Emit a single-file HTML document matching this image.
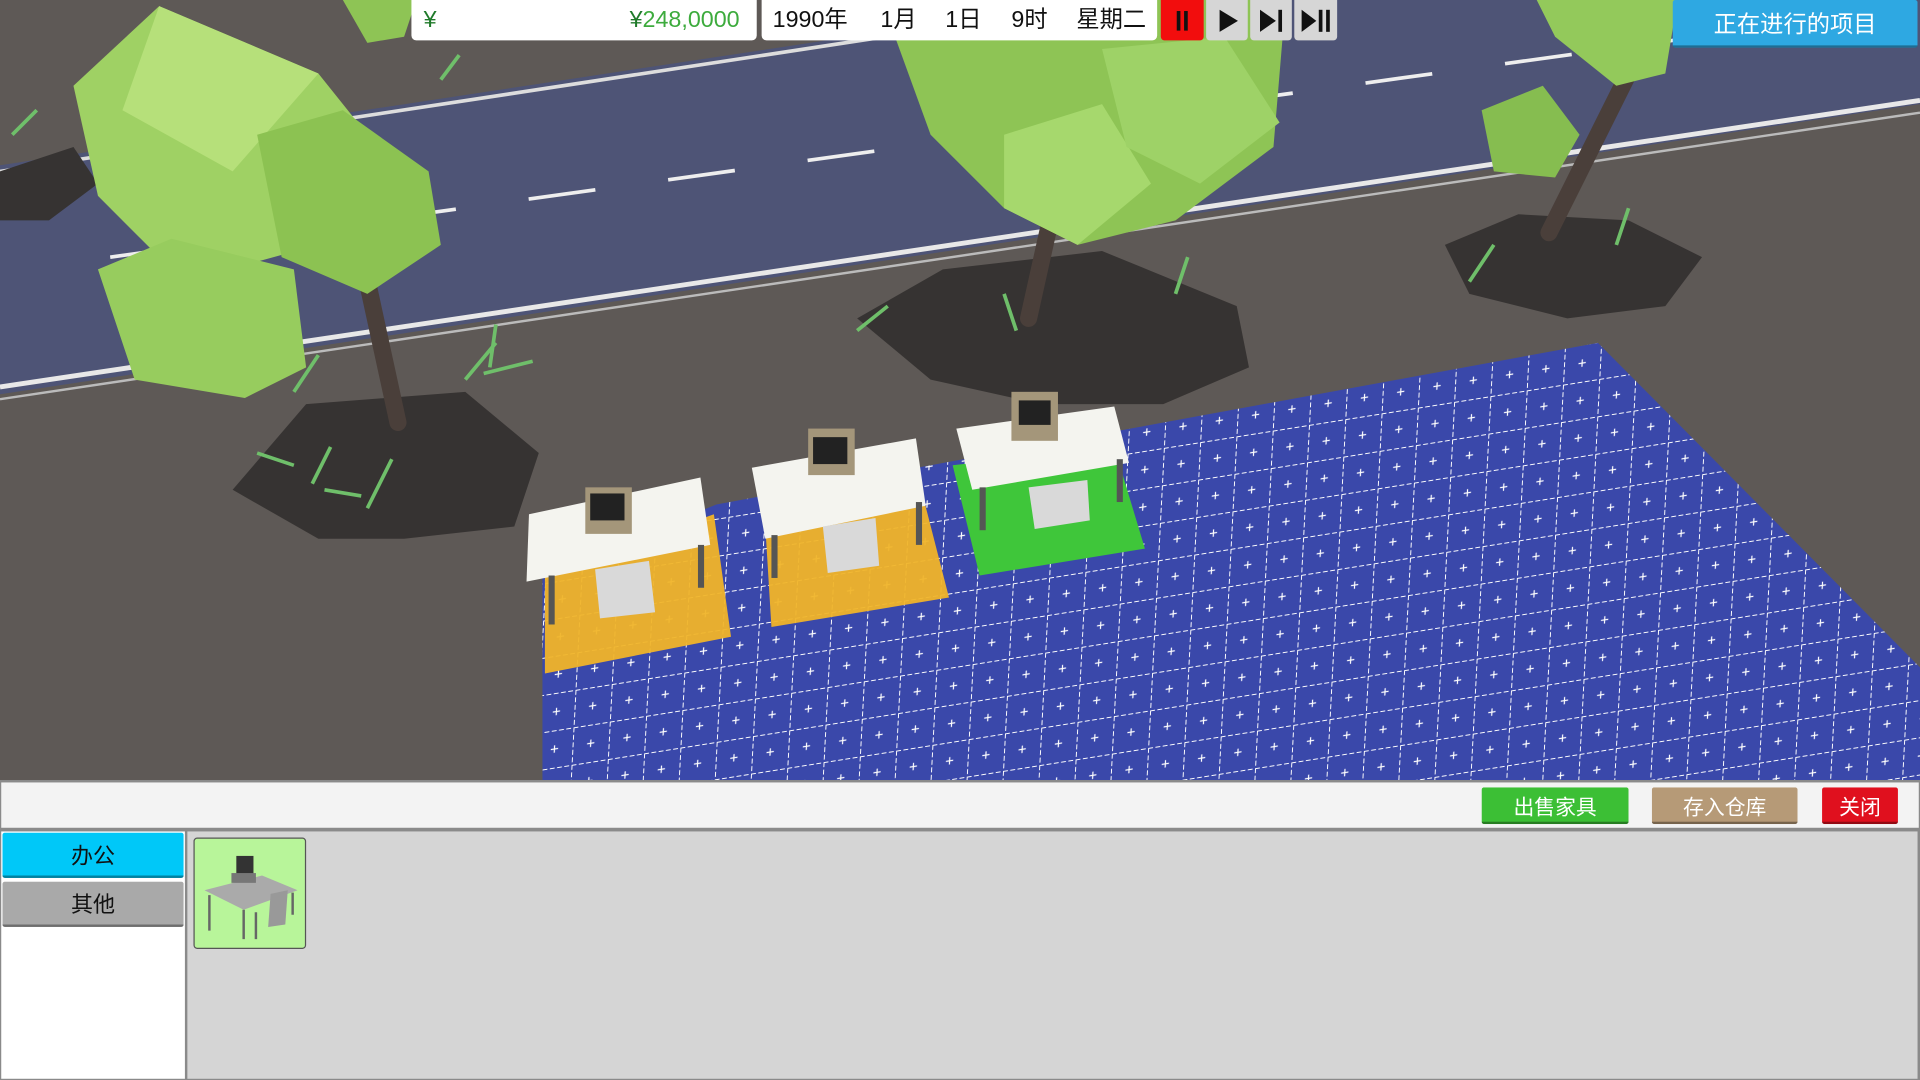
<!DOCTYPE html>
<html><head><meta charset="utf-8">
<style>
html,body{margin:0;padding:0;width:1920px;height:1080px;overflow:hidden;background:#5e5956}
#w{position:absolute;left:0;top:0;width:1568px;height:882px;transform:scale(1.22449);transform-origin:0 0;font-family:"Liberation Sans","Noto Sans CJK SC",sans-serif}
.a{position:absolute;box-sizing:border-box}
.btn{display:flex;align-items:center;justify-content:center;color:#fff;font-size:17px;border-radius:2px;border-bottom:2px solid rgba(0,0,0,.35)}
.d{position:absolute;top:0;line-height:33px}
</style></head><body><div id="w">
<svg class="a" style="left:0;top:0" width="1568" height="640" viewBox="0 0 1568 640">
<defs>
<pattern id="g" width="30" height="30" patternUnits="userSpaceOnUse" patternTransform="rotate(-9) skewX(-12)">
<rect width="30" height="30" fill="#3a48aa"/>
<path d="M0 0H30M0 0V30" stroke="#fff" stroke-width="1.6" stroke-dasharray="4 2" fill="none"/>
<path d="M15 12V18M12 15H18" stroke="#fff" stroke-width="1"/>
</pattern>
</defs>
<rect width="1568" height="640" fill="#5e5956"/>
<polygon points="0,135 893,0 1568,0 1568,85 0,322" fill="#4e5476"/>
<path d="M0,140 L920,0" stroke="#ddd" stroke-width="3"/>
<path d="M0,316 L1568,82" stroke="#e8e8e8" stroke-width="4"/>
<path d="M0,326 L1568,92" stroke="#bbb" stroke-width="2"/>
<path d="M90,210 L1568,5" stroke="#eee" stroke-width="3" stroke-dasharray="55 60"/>
<g fill="#363332">
<polygon points="190,400 250,330 380,320 440,370 420,430 330,440 260,440"/>
<polygon points="700,260 770,220 900,205 1010,250 1020,300 950,330 850,330 760,310"/>
<polygon points="1180,200 1240,175 1330,180 1390,210 1360,250 1280,260 1200,240"/>
<polygon points="0,140 60,120 80,150 40,180 0,180"/>
</g>
<polygon points="443,640 443,470 585,412 1305,280 1568,545 1568,640" fill="url(#g)"/>
<polygon points="445,470 583,420 597,520 445,550" fill="#f0b429" opacity=".95"/>
<polygon points="625,430 755,410 775,488 630,512" fill="#f0b429" opacity=".95"/>
<polygon points="778,380 910,365 935,448 800,470" fill="#3fc63a"/>
<g>
<polygon points="432,420 572,390 580,445 430,475" fill="#f4f4ef"/>
<rect x="448" y="470" width="5" height="40" fill="#555"/><rect x="570" y="445" width="5" height="35" fill="#555"/>
<rect x="478" y="398" width="38" height="38" fill="#a4967a"/><rect x="482" y="403" width="28" height="22" fill="#222"/>
<polygon points="486,465 530,458 535,500 490,505" fill="#d9d9d9"/>
<polygon points="614,382 748,358 756,413 625,440" fill="#f4f4ef"/>
<rect x="630" y="437" width="5" height="35" fill="#555"/><rect x="748" y="410" width="5" height="35" fill="#555"/>
<rect x="660" y="350" width="38" height="38" fill="#a4967a"/><rect x="664" y="357" width="28" height="22" fill="#222"/>
<polygon points="672,430 715,423 718,462 676,468" fill="#d9d9d9"/>
<polygon points="781,350 910,332 922,378 794,400" fill="#f4f4ef"/>
<rect x="800" y="398" width="5" height="35" fill="#555"/><rect x="912" y="375" width="5" height="35" fill="#555"/>
<rect x="826" y="320" width="38" height="40" fill="#a4967a"/><rect x="832" y="327" width="26" height="20" fill="#222"/>
<polygon points="840,398 888,392 890,425 845,432" fill="#d9d9d9"/>
</g>
<g stroke="#4a3f3a" stroke-width="14" stroke-linecap="round">
<line x1="300" y1="230" x2="325" y2="345"/><line x1="860" y1="170" x2="840" y2="260"/><line x1="1330" y1="60" x2="1265" y2="190"/>
</g>
<g>
<polygon points="60,70 130,5 260,60 300,110 260,200 150,230 80,160" fill="#9fd164"/>
<polygon points="130,5 260,60 190,140 100,90" fill="#b6e07a"/>
<polygon points="210,110 280,90 350,140 360,200 300,240 230,210" fill="#8cc252"/>
<polygon points="80,220 140,195 240,220 250,300 200,325 110,310" fill="#97cc5e"/>
<polygon points="720,0 1050,0 1040,120 960,180 880,200 820,170 760,110" fill="#8ec455"/>
<polygon points="820,110 900,85 940,150 880,200 820,170" fill="#a6d86d"/>
<polygon points="900,40 1000,30 1045,100 980,150 920,120" fill="#9ed267"/>
<polygon points="1210,90 1260,70 1290,110 1270,145 1220,140" fill="#86bd50"/>
<polygon points="1255,0 1370,0 1360,60 1320,70 1270,30" fill="#93c95b"/>
<polygon points="280,0 340,0 330,30 300,35" fill="#8ec455"/>
</g>
<g stroke="#6fbf6a" stroke-width="3" fill="none">
<path d="M380,310 l25,-30 M400,300 l5,-35 M395,305 l40,-10"/>
<path d="M240,380 l-30,-10 M255,395 l15,-30 M265,400 l30,5"/>
<path d="M300,415 l20,-40 M240,320 l20,-30 M700,270 l25,-20 M830,270 l-10,-30 M960,240 l10,-30 M1200,230 l20,-30 M1320,200 l10,-30 M10,110 l20,-20 M360,65 l15,-20"/>
</g>
</svg>

<div class="a" style="left:336px;top:0;width:282px;height:33px;background:#fff;border-radius:0 0 4px 4px;font-size:19px;line-height:33px">
<span style="position:absolute;left:10px;color:#1f7a2a">¥</span>
<span style="position:absolute;right:14px;color:#3dab3d"><span style="color:#1f7a2a">¥</span>248,0000</span></div>
<div class="a" style="left:622px;top:0;width:323px;height:33px;background:#fff;border-radius:0 0 4px 4px;font-size:19px;color:#111">
<span class="d" style="left:9px">1990年</span><span class="d" style="left:97px">1月</span><span class="d" style="left:150px">1日</span><span class="d" style="left:204px">9时</span><span class="d" style="left:257px">星期二</span></div>
<div class="a" style="left:948px;top:0;width:35px;height:33px;background:#f20d0d;border-radius:0 0 3px 3px"><div class="a" style="left:13px;top:9px;width:3px;height:16px;background:#111"></div><div class="a" style="left:19px;top:9px;width:3px;height:16px;background:#111"></div></div>
<div class="a" style="left:985px;top:0;width:34px;height:33px;background:#d6d6d6;border-radius:0 0 3px 3px"><svg class="a" style="left:9px;top:7px" width="18" height="20"><polygon points="2,1 17,10 2,19" fill="#111"/></svg></div>
<div class="a" style="left:1021px;top:0;width:34px;height:33px;background:#d6d6d6;border-radius:0 0 3px 3px"><svg class="a" style="left:6px;top:7px" width="24" height="20"><polygon points="2,1 15,10 2,19" fill="#111"/><rect x="17" y="1" width="3" height="18" fill="#111"/></svg></div>
<div class="a" style="left:1057px;top:0;width:35px;height:33px;background:#d6d6d6;border-radius:0 0 3px 3px"><svg class="a" style="left:4px;top:7px" width="28" height="20"><polygon points="2,1 14,10 2,19" fill="#111"/><rect x="16" y="1" width="3" height="18" fill="#111"/><rect x="22" y="1" width="3" height="18" fill="#111"/></svg></div>
<div class="a btn" style="left:1366px;top:0;width:200px;height:39px;background:#2ea8e2;font-size:19px">正在进行的项目</div>

<div class="a" style="left:0;top:637px;width:1568px;height:245px;background:#8a8a8a"></div>
<div class="a" style="left:1px;top:639px;width:1566px;height:37px;background:#f3f3f3"></div>
<div class="a btn" style="left:1210px;top:643px;width:120px;height:30px;background:#3cbf35">出售家具</div>
<div class="a btn" style="left:1349px;top:643px;width:119px;height:30px;background:#b69a77">存入仓库</div>
<div class="a btn" style="left:1488px;top:643px;width:62px;height:30px;background:#e0101e">关闭</div>
<div class="a" style="left:1px;top:679px;width:150px;height:202px;background:#fff"></div>
<div class="a btn" style="left:2px;top:680px;width:148px;height:37px;background:#00c8f8;color:#111;font-size:18px">办公</div>
<div class="a btn" style="left:2px;top:720px;width:148px;height:37px;background:#a9a9a9;color:#111;font-size:18px">其他</div>
<div class="a" style="left:153px;top:679px;width:1413px;height:202px;background:#d5d5d5"></div>
<div class="a" style="left:158px;top:684px;width:92px;height:91px;background:#b8f59a;border:1px solid #555;border-radius:3px">
<svg width="90" height="89"><polygon points="8,42 55,30 84,42 40,58" fill="#aaa"/><line x1="12" y1="46" x2="12" y2="75" stroke="#666" stroke-width="2"/><line x1="40" y1="58" x2="40" y2="82" stroke="#666" stroke-width="2"/><line x1="80" y1="44" x2="80" y2="62" stroke="#666" stroke-width="2"/><rect x="34" y="14" width="14" height="16" fill="#333"/><rect x="30" y="28" width="20" height="8" fill="#777"/><polygon points="62,45 76,42 74,70 60,72" fill="#999"/><line x1="50" y1="60" x2="50" y2="82" stroke="#666" stroke-width="2"/></svg></div>
</div></body></html>
